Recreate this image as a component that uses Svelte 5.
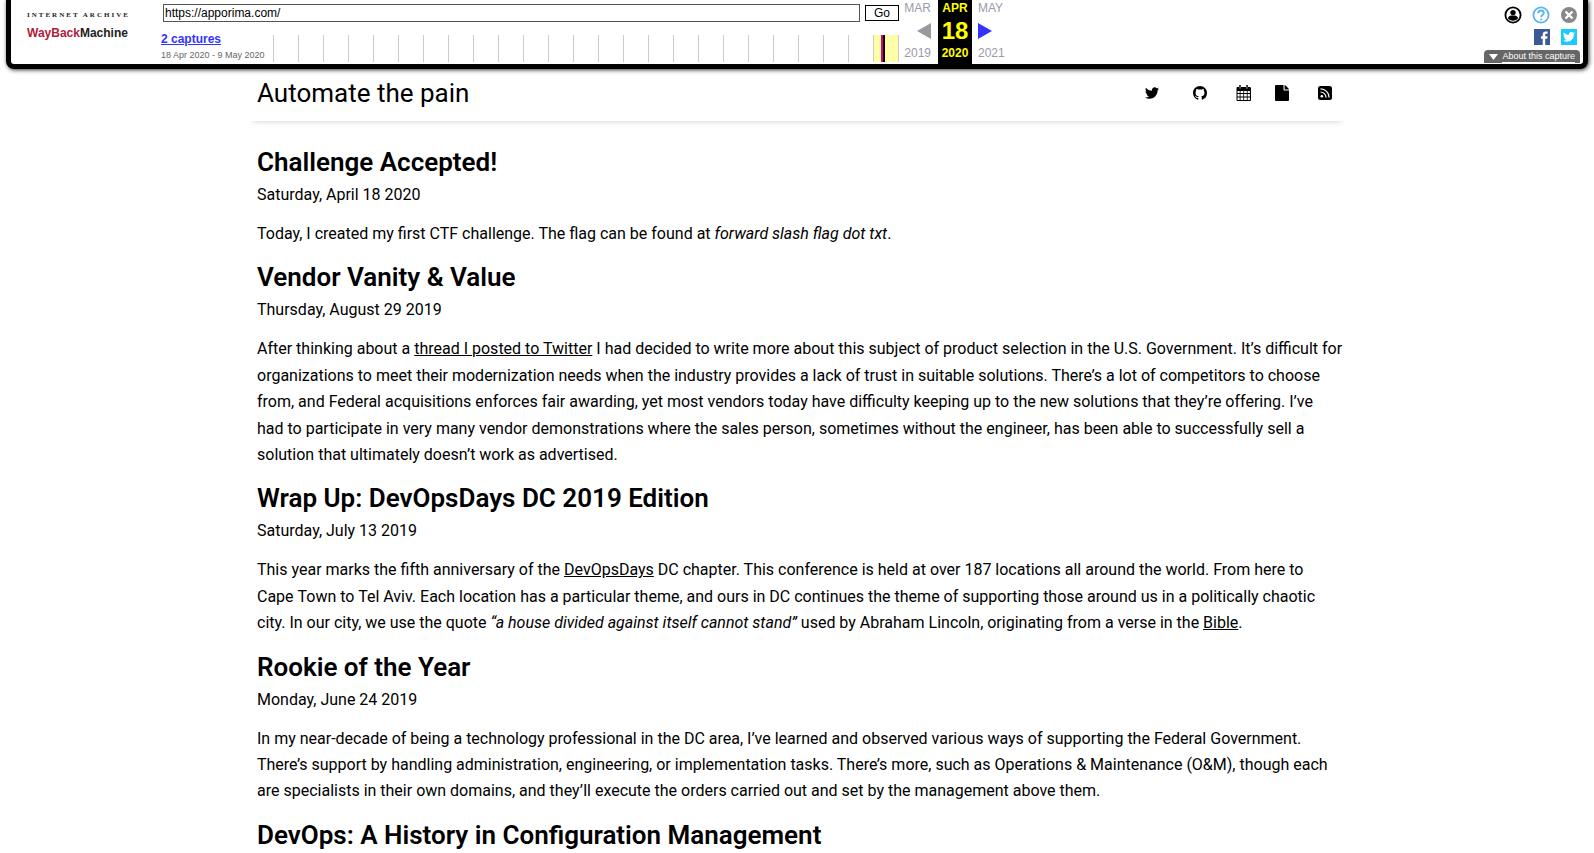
<script>
  const ticks = Array.from({ length: 25 }, (_, i) => i);
  const posts = [
    { title: 'Challenge Accepted!', date: 'Saturday, April 18 2020', body: [{ t: 'Today, I created my first CTF challenge. The flag can be found at ' }, { t: 'forward slash flag dot txt', k: 'em' }, { t: '.' }] },
    { title: 'Vendor Vanity & Value', date: 'Thursday, August 29 2019', body: [{ t: 'After thinking about a ' }, { t: 'thread I posted to Twitter', k: 'a' }, { t: ' I had decided to write more about this subject of product selection in the U.S. Government. It’s difficult for organizations to meet their modernization needs when the industry provides a lack of trust in suitable solutions. There’s a lot of competitors to choose from, and Federal acquisitions enforces fair awarding, yet most vendors today have difficulty keeping up to the new solutions that they’re offering. I’ve had\u00a0to participate in very many vendor demonstrations where the sales person, sometimes without the engineer, has been able to successfully sell a solution that ultimately doesn’t work as advertised.' }] },
    { title: 'Wrap Up: DevOpsDays DC 2019 Edition', date: 'Saturday, July 13 2019', body: [{ t: 'This year marks the fifth anniversary of the ' }, { t: 'DevOpsDays', k: 'a' }, { t: ' DC chapter. This conference is held at over 187 locations all around the world. From here to Cape\u00a0Town to Tel Aviv. Each location has a particular theme, and ours in DC continues the theme of supporting those around us in a politically chaotic city. In our city, we use the quote ' }, { t: '“a house divided against itself cannot stand”', k: 'em' }, { t: ' used by Abraham Lincoln, originating from a verse in the ' }, { t: 'Bible', k: 'a' }, { t: '.' }] },
    { title: 'Rookie of the Year', date: 'Monday, June 24 2019', body: [{ t: 'In my near-decade of being a technology professional in the DC area, I’ve learned and observed various ways of supporting the Federal Government. There’s support by handling administration, engineering, or implementation tasks. There’s more, such as Operations & Maintenance (O&M), though each are specialists in their own domains, and they’ll execute the orders carried out and set by the management above them.' }] },
    { title: 'DevOps: A History in Configuration Management', body: [] }
  ];
</script>

<div class="page">
  <section class="toolbar" aria-label="Wayback Machine">
    <a class="logo" href="#home">
      <span class="ia">INTERNET ARCHIVE</span>
      <span class="wm"><b>WayBack</b>Machine</span>
    </a>
    <div class="middle">
      <form class="search">
        <input type="text" aria-label="URL" value="https://apporima.com/" />
        <button type="button">Go</button>
      </form>
      <div class="history">
        <div class="captures">
          <a href="#captures">2 captures</a>
          <span>18 Apr 2020 - 9 May 2020</span>
        </div>
        <div class="spark">
          {#each ticks as i}<i class:now={i === 24}></i>{/each}
        </div>
      </div>
    </div>
    <div class="months">
      <div class="col prev">
        <span>MAR</span>
        <svg width="14" height="16" viewBox="0 0 14 16"><path d="M14 0v16L0 8z" fill="#999aa0" /></svg>
        <span>2019</span>
      </div>
      <div class="col cur"><span>APR</span><strong>18</strong><span>2020</span></div>
      <div class="col next">
        <span>MAY</span>
        <a href="#next" aria-label="Next capture"><svg width="14" height="16" viewBox="0 0 14 16"><path d="M0 0v16l14-8z" fill="#33f" /></svg></a>
        <span>2021</span>
      </div>
    </div>
    <div class="tools">
      <div class="row">
        <a href="#user" aria-label="Sign in"><svg width="18" height="18" viewBox="0 0 18 18"><circle cx="9" cy="9" r="7.6" fill="#fff" stroke="#000" stroke-width="1.8" /><circle cx="9" cy="6.6" r="2.7" /><path d="M4 12.6c0-2 2-3.200 3.400-3.200h3.200c1.400 0 3.400 1.200 3.400 3.200-1.200 1.300-3 2.100-5 2.100s-3.800-.8-5-2.100z" /></svg></a>
        <a href="#help" aria-label="Help"><svg width="18" height="18" viewBox="0 0 18 18" fill="none" stroke="#5ab4ee" stroke-width="1.800"><circle cx="9" cy="9" r="7.600" /><path d="M6.200 7.200c0-1.700 1.200-2.700 2.800-2.700s2.800 1 2.800 2.500c0 2-2.700 2-2.700 4.100M9.100 12.400v1.800" /></svg></a>
        <a href="#close" aria-label="Close"><svg width="18" height="18" viewBox="0 0 18 18"><circle cx="9" cy="9" r="8" fill="#888" /><path d="M5.500 5.500l7 7m0-7l-7 7" stroke="#fff" stroke-width="2.400" /></svg></a>
      </div>
      <div class="row social">
        <a href="#fb" aria-label="Facebook"><svg width="16" height="16" viewBox="0 0 16 16"><path fill="#3b5998" d="M0 0h16v16H0z" /><path fill="#fff" d="M8.700 16V9.800H7V7.300h1.700V5.700c0-2.200 1.200-3.200 3-3.200h1.900v2.300h-1.300c-.8 0-1.100.4-1.100 1.100v1.400h2.300l-.3 2.500h-2V16z" /></svg></a>
        <a href="#tw" aria-label="Twitter"><svg width="16" height="16" viewBox="0 0 16 16"><path fill="#1dcaff" d="M0 0h16v16H0z" /><path transform="translate(1.200 1.100) scale(.0076)" fill="#fff" d="M1684 408q-67 98-162 167 1 14 1 42 0 130-38 259.500t-115.500 248.500-184.500 210.500-258 146-323 54.500q-271 0-496-145 35 4 78 4 225 0 401-138-105-2-188-64.500t-114-159.500q33 5 61 5 43 0 85-11-112-23-185.500-111.500t-73.500-205.500v-4q68 38 146 41-66-44-105-115t-39-154q0-88 44-163 121 149 294.500 238.500t371.500 99.500q-8-38-8-74 0-134 94.500-228.500t228.500-94.500q140 0 236 102 109-21 205-78-37 115-142 178 93-10 186-50z" /></svg></a>
      </div>
      <button class="about" type="button"><svg width="9" height="6" viewBox="0 0 9 6"><path d="M0 0h9L4.500 6z" fill="#fff" /></svg><span>About this capture</span></button>
    </div>
  </section>

  <header>
    <a class="brand" href="#top">Automate the pain</a>
    <nav>
      <a href="#twitter" aria-label="Twitter"><svg width="16" height="16" viewBox="0 0 1792 1792"><path d="M1684 408q-67 98-162 167 1 14 1 42 0 130-38 259.500t-115.500 248.500-184.500 210.500-258 146-323 54.500q-271 0-496-145 35 4 78 4 225 0 401-138-105-2-188-64.500t-114-159.500q33 5 61 5 43 0 85-11-112-23-185.500-111.500t-73.500-205.500v-4q68 38 146 41-66-44-105-115t-39-154q0-88 44-163 121 149 294.500 238.500t371.500 99.500q-8-38-8-74 0-134 94.500-228.500t228.500-94.500q140 0 236 102 109-21 205-78-37 115-142 178 93-10 186-50z" /></svg></a>
      <a href="#github" aria-label="GitHub"><svg width="14" height="14" viewBox="0 0 16 16"><path d="M8 0C3.580 0 0 3.580 0 8c0 3.540 2.290 6.530 5.470 7.590.4.070.550-.170.550-.380 0-.190-.010-.820-.010-1.490-2.010.370-2.530-.490-2.690-.940-.090-.230-.480-.940-.820-1.130-.280-.150-.680-.520-.010-.530.630-.010 1.080.580 1.230.820.720 1.210 1.870.870 2.330.660.070-.520.280-.870.510-1.070-1.780-.2-3.640-.890-3.640-3.950 0-.870.310-1.590.820-2.150-.080-.2-.360-1.020.080-2.120 0 0 .670-.210 2.200.820.640-.180 1.320-.270 2-.270s1.360.090 2 .270c1.530-1.040 2.200-.820 2.200-.820.440 1.100.160 1.920.080 2.120.510.560.820 1.270.820 2.150 0 3.070-1.870 3.750-3.650 3.950.290.250.540.730.540 1.480 0 1.070-.010 1.930-.010 2.200 0 .210.150.460.550.380A8.010 8.010 0 0 0 16 8c0-4.420-3.580-8-8-8z" /></svg></a>
      <a href="#calendar" aria-label="Calendar"><svg width="16" height="16" viewBox="0 0 16 16"><path fill-rule="evenodd" d="M1.500 2H3V1q0-1 1-1t1 1v1h5V1q0-1 1-1t1 1v1h1.500Q15 2 15 3.200V15q0 1-1 1H1.500q-1 0-1-1V3q0-1 1-1zM1.500 6v2h2.200V6zm3 0v2h2.800V6zm3.600 0v2h2.700V6zm3.500 0v2h2.300V6zM1.500 9v2.500h2.200V9zm3 0v2.500h2.800V9zm3.600 0v2.500h2.700V9zm3.500 0v2.500h2.300V9zM1.500 12.500V15h2.200v-2.500zm3 0V15h2.800v-2.500zm3.600 0V15h2.700v-2.500zm3.500 0V15h2.300v-2.500zM3.700 1.200v2.600h.7V1.200zm6.900 0v2.600h.7V1.200z" /></svg></a>
      <a href="#file" aria-label="Documents"><svg width="14" height="16" viewBox="0 0 14 16"><path d="M0 1q0-1 1-1h7.500v4.500q0 1 1 1H14V15q0 1-1 1H1q-1 0-1-1zM9.600 0q.6.100 1 .5l2.900 2.900q.4.400.5 1H9.600z" /></svg></a>
      <a href="#rss" aria-label="RSS"><svg width="14" height="14" viewBox="0 0 14 14"><rect width="14" height="14" rx="2.500" /><circle cx="3.800" cy="10.200" r="1.300" fill="#fff" /><path d="M2.500 6a5.500 5.500 0 0 1 5.500 5.500M2.500 2.900a8.600 8.600 0 0 1 8.600 8.600" stroke="#fff" stroke-width="1.200" fill="none" /></svg></a>
    </nav>
  </header>

  <main>
    {#each posts as p}
      <article>
        <h2>{p.title}</h2>
        {#if p.date}<time>{p.date}</time>{/if}
        {#if p.body.length}
          <p>{#each p.body as s}{#if s.k === 'em'}<em>{s.t}</em>{:else if s.k === 'a'}<a href="#post">{s.t}</a>{:else}{s.t}{/if}{/each}</p>
        {/if}
      </article>
    {/each}
  </main>
</div>

<style>
  :global(body) { margin: 0; background: #fff; overflow: hidden; }
  .page { height: 100vh; overflow: hidden; font: 16px/1.65 Roboto, sans-serif; color: #000; }
  svg { display: block; }
  .toolbar {
    position: relative; z-index: 1; box-sizing: border-box; margin: 0 6px; height: 69px;
    display: flex; background: #fff; border: 5px solid #000; border-top: 0; border-radius: 0 0 8px 8px;
    box-shadow: 1px 1px 4px #333; font: 11px/14px "Liberation Sans", Arial, sans-serif;
  }
  .logo { width: 150px; box-sizing: border-box; padding: 11px 0 0 16px; text-decoration: none; color: #222; flex: none; white-space: nowrap; }
  .ia { display: block; font: bold 7px/8px "Liberation Serif", serif; letter-spacing: 2px; }
  .wm { display: block; font: bold 12px/28px "Liberation Sans Narrow", "Liberation Sans", sans-serif; }
  .wm b { color: #b01c3a; }
  .middle { width: 738px; flex: none; }
  .search { display: flex; gap: 5px; padding-top: 4px; margin-left: 2px; }
  .search input { flex: 1; min-width: 0; height: 18px; box-sizing: border-box; border: 1px solid #555; padding: 0 1px; font: 12px "Liberation Sans", sans-serif; color: #000; }
  .search button { width: 34px; height: 16px; margin-top: 1px; box-sizing: border-box; border: 1px solid #000; background: #fff; padding: 0; font: 12px/12px "Liberation Sans", sans-serif; color: #000; }
  .history { display: flex; justify-content: space-between; margin-top: 9px; padding-top: 4px; }
  .captures { margin-top: -4px; white-space: nowrap; }
  .captures a { display: block; font-weight: bold; font-size: 12px; line-height: 16px; color: #33f; }
  .captures span { display: block; font-size: 9px; line-height: 16px; color: #666; }
  .spark { display: flex; height: 27px; }
  .spark i { width: 24px; border-left: 1px solid #ccc; }
  .spark .now { background: linear-gradient(to right, #ffa 7px, #d8007c 7px 9px, #000 9px 11px, #ffa 11px); border-right: 1px solid #ccc; }
  .months { display: flex; color: #9a9aaa; font-size: 12px; }
  .col { width: 38px; height: 64px; display: flex; flex-direction: column; justify-content: space-between; box-sizing: border-box; padding: 1px 6px 4px; }
  .prev { align-items: flex-end; }
  .cur { width: 34px; margin-left: 1px; background: #000; color: #ff0; font-weight: bold; align-items: center; }
  .cur strong { font-size: 24px; line-height: 24px; }
  .tools { margin-left: auto; display: flex; flex-direction: column; align-items: flex-end; padding-right: 3px; }
  .row { display: flex; gap: 10px; margin: 6px 2px 0 0; }
  .social { gap: 11px; margin: 5px 3px 0 0; }
  .about { margin-top: auto; margin-bottom: 1px; display: flex; align-items: center; gap: 4px; border: 0; border-radius: 4px 4px 0 0; background: #666; color: #fff; height: 13px; padding: 0 5px; font: 9px/11px "Liberation Sans", sans-serif; }
  .about span { border-bottom: 1px solid #fff; }
  header { max-width: 1104px; height: 52px; margin: 0 auto; box-sizing: border-box; padding: 0 17px 4px 12px; display: flex; align-items: center; justify-content: space-between; box-shadow: 0 8px 6px -8px #ccc; }
  .brand { font-size: 26px; line-height: 32px; color: #000; text-decoration: none; }
  nav { display: grid; grid-template-columns: 49px 43px 39px 43px 14px; align-items: center; }
  main { max-width: 1080px; margin: 0 auto; padding-top: 24px; }
  h2 { margin: 0 0 2px; font-size: 26px; line-height: 34px; font-weight: 600; }
  time { display: block; line-height: 28px; }
  p { margin: 12px -8px 13px 0; }
  p a { color: #000; }
</style>
